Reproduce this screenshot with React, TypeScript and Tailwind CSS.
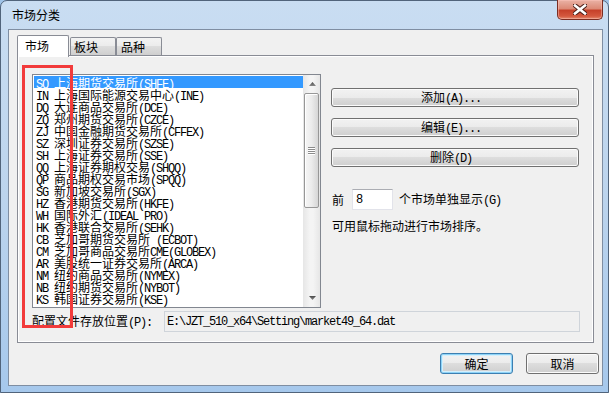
import React from 'react';

function Mixed({ text, mono = "text-[12px] tracking-[-1.2px]" }: { text: string; mono?: string }) {
  const parts = text.match(/[\x00-\xff]+|[^\x00-\xff]+/g) || [];
  return (
    <>
      {parts.map((p, i) =>
        /^[\x00-\xff]/.test(p) ? (
          <span key={i} className={"font-['Liberation_Mono',monospace] whitespace-pre " + mono}>
            {p}
          </span>
        ) : (
          <span key={i} className="font-['Noto_Sans_CJK_SC',sans-serif] text-[12px]">
            {p}
          </span>
        )
      )}
    </>
  );
}

const items = [
  'SQ 上海期货交易所(SHFE)',
  'IN 上海国际能源交易中心(INE)',
  'DQ 大连商品交易所(DCE)',
  'ZQ 郑州期货交易所(CZCE)',
  'ZJ 中国金融期货交易所(CFFEX)',
  'SZ 深圳证券交易所(SZSE)',
  'SH 上海证券交易所(SSE)',
  'QQ 上海证券期权交易(SHQQ)',
  'QP 商品期权交易市场(SPQQ)',
  'SG 新加坡交易所(SGX)',
  'HZ 香港期货交易所(HKFE)',
  'WH 国际外汇(IDEAL PRO)',
  'HK 香港联合交易所(SEHK)',
  'CB 芝加哥期货交易所 (ECBOT)',
  'CM 芝加哥商品交易所CME(GLOBEX)',
  'AR 美股统一证券交易所(ARCA)',
  'NM 纽约商品交易所(NYMEX)',
  'NB 纽约期货交易所(NYBOT)',
  'KS 韩国证券交易所(KSE)',
];

const btnBg =
  "bg-[linear-gradient(to_bottom,#f2f2f2_0%,#ebebeb_50%,#dddddd_50%,#cfcfcf_100%)] shadow-[inset_0_0_0_1px_#fbfbfb]";

function WinButton({ label, className = '' }: { label: string; className?: string }) {
  return (
    <div
      className={
        'flex items-center justify-center rounded-[3px] border border-[#707070] leading-[12px] ' +
        btnBg +
        ' ' +
        className
      }
    >
      <span className="-ml-[8px]">
        <Mixed text={label} />
      </span>
    </div>
  );
}

function Arrow({ up }: { up: boolean }) {
  return (
    <svg width="7" height="4" viewBox="0 0 7 4">
      <defs>
        <linearGradient id={up ? 'au' : 'ad'} x1="0" y1="0" x2="0" y2="1">
          <stop offset="0" stopColor="#4a4a4a" />
          <stop offset="1" stopColor="#8a8a8a" />
        </linearGradient>
      </defs>
      {up ? (
        <polygon points="3.5,0 7,4 0,4" fill={`url(#au)`} />
      ) : (
        <polygon points="0,0 7,0 3.5,4" fill={`url(#ad)`} />
      )}
    </svg>
  );
}

export default function App() {
  return (
    <div className="w-[609px] h-[393px] overflow-hidden bg-[#9fc3e8]">
      <div className="relative w-[609px] h-[393px] flex flex-col rounded-t-[7px] border border-[#51647b] bg-linear-to-b from-[#c9ddf2] via-[#bcd4ed] to-[#a6c8ec] text-black">
        {/* title bar */}
        <div className="flex items-start h-[28px] shrink-0">
          <div className="pl-[11px] pt-[8px] leading-[12px] font-['Noto_Sans_CJK_SC',sans-serif] text-[12px] text-black">
            市场分类
          </div>
          <div className="ml-auto mr-[5px] -mt-px w-[46px] h-[20px] rounded-b-[5px] border border-[#7b2d22] border-t-0 bg-[linear-gradient(to_bottom,#eab2a5_0%,#dc8a76_45%,#c6412a_55%,#d4583e_85%,#e48c70_100%)] shadow-[inset_0_0_0_1px_rgba(255,200,190,0.45)] flex items-center justify-center">
            <svg width="14" height="11" viewBox="0 0 14 11">
              <path d="M2 1.5 L12 9.5 M12 1.5 L2 9.5" stroke="#4a1d17" strokeWidth="4.6" strokeLinecap="square" />
              <path d="M2 1.5 L12 9.5 M12 1.5 L2 9.5" stroke="#ffffff" strokeWidth="2.6" strokeLinecap="square" />
            </svg>
          </div>
        </div>

        {/* client */}
        <div className="ml-[7px] mr-[5px] h-[357px] border border-[#7f8ea2] bg-[#f0f0f0] pl-[8px] pt-[5px] flex flex-col">
          {/* tabs */}
          <div className="flex items-end h-[20px] relative z-10">
            <div className="relative z-10 w-[52px] h-[22px] -mb-[2px] border-l border-t border-r border-[#898c95] rounded-t-[2px] bg-white pl-[7px] pt-[4px] leading-[12px] text-[12px] font-['Noto_Sans_CJK_SC',sans-serif]">
              市场
            </div>
            <div className="w-[46px] h-[18px] ml-[1px] border-l border-t border-r border-[#898c95] rounded-t-[2px] bg-[linear-gradient(to_bottom,#f3f3f3,#ebebeb_50%,#dddddd_50%,#cfcfcf)] pl-[3px] pt-[3px] leading-[12px] text-[12px] font-['Noto_Sans_CJK_SC',sans-serif]">
              板块
            </div>
            <div className="w-[46px] h-[18px] border-l border-t border-r border-[#898c95] rounded-t-[2px] bg-[linear-gradient(to_bottom,#f3f3f3,#ebebeb_50%,#dddddd_50%,#cfcfcf)] pl-[4px] pt-[3px] leading-[12px] text-[12px] font-['Noto_Sans_CJK_SC',sans-serif]">
              品种
            </div>
          </div>

          {/* panel */}
          <div className="w-[577px] h-[288px] border border-[#898c95] bg-[#f0f0f0] shadow-[inset_1px_1px_0_#ffffff,inset_-1px_-1px_0_#ffffff] pl-[14px] pt-[18px] flex flex-col">
            <div className="flex">
              {/* list */}
              <div className="w-[289px] h-[234px] border border-[#828790] bg-white flex">
                <div className="flex-1 pl-[1px] pt-[1px] overflow-hidden">
                  {items.map((t, i) => (
                    <div
                      key={i}
                      className={
                        'h-[12px] leading-[12px] pl-[2px] whitespace-nowrap ' +
                        (i === 0 ? 'bg-[#3399ff] text-white' : 'text-black')
                      }
                    >
                      <Mixed text={t} />
                    </div>
                  ))}
                </div>
                {/* scrollbar */}
                <div className="w-[17px] flex flex-col bg-[linear-gradient(to_right,#e6e6e6,#f4f4f4_40%,#f4f4f4_60%,#e6e6e6)]">
                  <div className="h-[17px] flex items-center justify-center pl-[1px]">
                    <Arrow up />
                  </div>
                  <div className="mt-[1px] mx-[1px] h-[115px] rounded-[2px] border border-[#979797] bg-linear-to-r from-[#f6f6f6] via-[#ececec] to-[#d6d6d6] shadow-[inset_1px_1px_0_#ffffff] flex items-center justify-center">
                    <svg width="7" height="8" viewBox="0 0 7 8">
                      <rect x="0" y="0" width="7" height="1" fill="#8b8b8b" />
                      <rect x="0" y="2" width="7" height="1" fill="#8b8b8b" />
                      <rect x="0" y="4" width="7" height="1" fill="#8b8b8b" />
                      <rect x="0" y="6" width="7" height="1" fill="#8b8b8b" />
                      <rect x="0" y="1" width="7" height="1" fill="#ffffff" />
                      <rect x="0" y="3" width="7" height="1" fill="#ffffff" />
                      <rect x="0" y="5" width="7" height="1" fill="#ffffff" />
                      <rect x="0" y="7" width="7" height="1" fill="#ffffff" />
                    </svg>
                  </div>
                  <div className="mt-auto h-[17px] flex items-center justify-center pl-[1px] mb-[1px]">
                    <Arrow up={false} />
                  </div>
                </div>
              </div>

              {/* right column */}
              <div className="ml-[10px] pt-[14px] w-[248px] flex flex-col">
                <WinButton label="添加(A)..." className="h-[19px]" />
                <WinButton label="编辑(E)..." className="h-[19px] mt-[11px]" />
                <WinButton label="删除(D)" className="h-[19px] mt-[11px]" />
                <div className="mt-[22px] flex items-center h-[21px] pl-[1px]">
                  <span className="font-['Noto_Sans_CJK_SC',sans-serif] text-[12px] leading-[12px]">前</span>
                  <div className="ml-[8px] w-[41px] h-[21px] border border-[#e2e3ea] border-t-[#abadb3] bg-white pl-[3px] flex items-center leading-[12px]">
                    <Mixed text="8" />
                  </div>
                  <span className="ml-[6px] leading-[12px]">
                    <Mixed text="个市场单独显示(G)" />
                  </span>
                </div>
                <div className="mt-[10px] pl-[1px] leading-[12px] font-['Noto_Sans_CJK_SC',sans-serif] text-[12px]">
                  可用鼠标拖动进行市场排序。
                </div>
              </div>
            </div>

            {/* path row */}
            <div className="mt-[3px] flex items-center h-[21px]">
              <div className="w-[132px] leading-[12px]">
                <Mixed text="配置文件存放位置(P):" />
              </div>
              <div className="w-[416px] h-[21px] border border-[#cfd4da] bg-[#f0f0f0] pl-[2px] flex items-center leading-[12px]">
                <Mixed text={'E:\\JZT_510_x64\\Setting\\market49_64.dat'} />
              </div>
            </div>
          </div>

          {/* footer buttons */}
          <div className="mt-[10px] flex justify-end gap-[13px] pr-[3px]">
            <div
              className={
                'w-[73px] h-[21px] flex items-center justify-center rounded-[3px] border border-[#3c7fb1] leading-[12px] font-["Noto_Sans_CJK_SC",sans-serif] text-[12px] bg-[linear-gradient(to_bottom,#f2f2f2_0%,#ebebeb_50%,#dddddd_50%,#cfcfcf_100%)] shadow-[inset_0_0_0_1px_#8ed3f7,inset_0_0_0_2px_#d4effc]'
              }
            >
              确定
            </div>
            <div
              className={
                'w-[73px] h-[21px] flex items-center justify-center rounded-[3px] border border-[#707070] leading-[12px] font-["Noto_Sans_CJK_SC",sans-serif] text-[12px] ' +
                btnBg
              }
            >
              取消
            </div>
          </div>
        </div>

        {/* red annotation rectangle */}
        <div className="absolute left-[21px] top-[64px] w-[51px] h-[263px] border-[3px] border-[#f23b3b] pointer-events-none" />
      </div>
    </div>
  );
}
